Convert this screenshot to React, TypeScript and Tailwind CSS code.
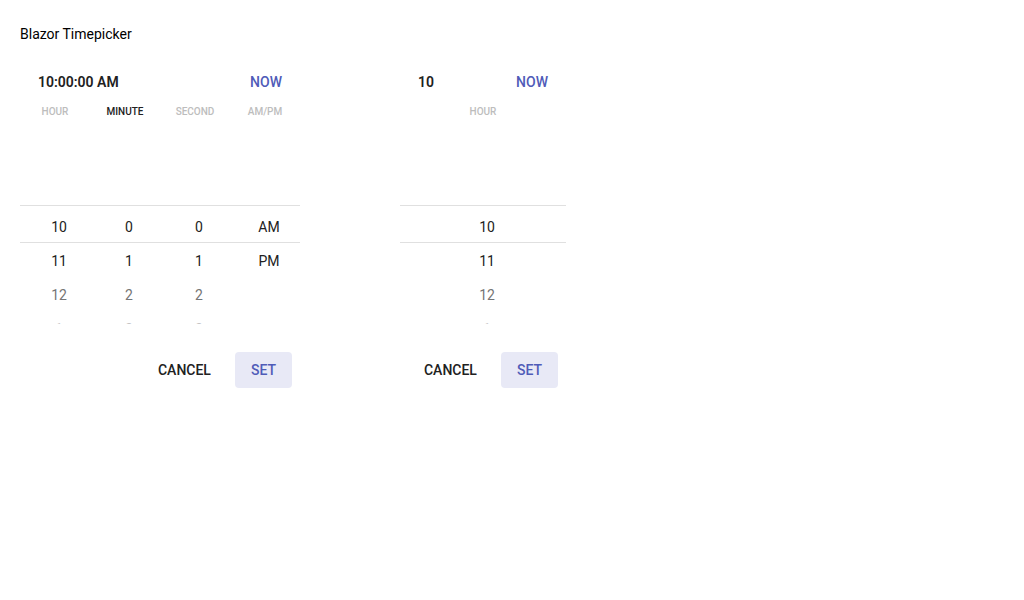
import React from "react";

type Col = { label: string; active?: boolean; values: string[] };

const rowColors = ["text-[#212121]", "text-[#212121]", "text-[#757575]", "text-[#c4c4c4]"];

function Wheel({ cols, width }: { cols: Col[]; width: number }) {
  return (
    <div className="relative h-[204px] overflow-hidden" style={{ width }}>
      <div className="absolute left-0 right-0 top-[85px] h-[38px] border-y border-[#e0e0e0]" />
      <div className="flex">
        {cols.map((c, i) => (
          <div key={i} className="flex flex-1 flex-col pt-[90px]">
            {c.values.map((v, j) => (
              <div
                key={j}
                className={`flex h-[34px] items-center justify-center pl-2 text-[14px] ${rowColors[j]}`}
              >
                {v}
              </div>
            ))}
          </div>
        ))}
      </div>
    </div>
  );
}

function Picker({ value, cols, width }: { value: string; cols: Col[]; width: number }) {
  return (
    <div className="flex flex-col" style={{ width }}>
      <div className="flex h-[40px] items-center justify-between px-[18px]">
        <span className="text-[14px] font-semibold text-[#212121]">{value}</span>
        <span className="text-[14px] font-medium text-[#4f5bb8]">NOW</span>
      </div>
      <div className="flex h-[18px] items-center">
        {cols.map((c, i) => (
          <div
            key={i}
            className={`flex-1 text-center text-[10px] font-medium ${c.active ? "text-[#212121]" : "text-[#bdbdbd]"}`}
          >
            {c.label}
          </div>
        ))}
      </div>
      <Wheel cols={cols} width={width} />
      <div className="flex justify-end gap-2 pr-2 pt-[28px]">
        <button className="h-9 rounded px-4 text-[14px] font-medium text-[#212121]">CANCEL</button>
        <button className="h-9 rounded bg-[#e8e9f6] px-4 text-[14px] font-medium text-[#4f5bb8]">SET</button>
      </div>
    </div>
  );
}

export default function App() {
  const hours = ["10", "11", "12", "1"];
  const nums = ["0", "1", "2", "3"];
  return (
    <div
      className="min-h-[600px] bg-white px-5 pt-6"
      style={{ fontFamily: "Roboto, 'Noto Sans', sans-serif" }}
    >
      <div className="h-5 text-[14px] leading-5 text-black">Blazor Timepicker</div>
      <div className="mt-[18px] flex gap-[100px]">
        <Picker
          value="10:00:00 AM"
          width={280}
          cols={[
            { label: "HOUR", values: hours },
            { label: "MINUTE", active: true, values: nums },
            { label: "SECOND", values: nums },
            { label: "AM/PM", values: ["AM", "PM"] },
          ]}
        />
        <Picker value="10" width={166} cols={[{ label: "HOUR", values: hours }]} />
      </div>
    </div>
  );
}
